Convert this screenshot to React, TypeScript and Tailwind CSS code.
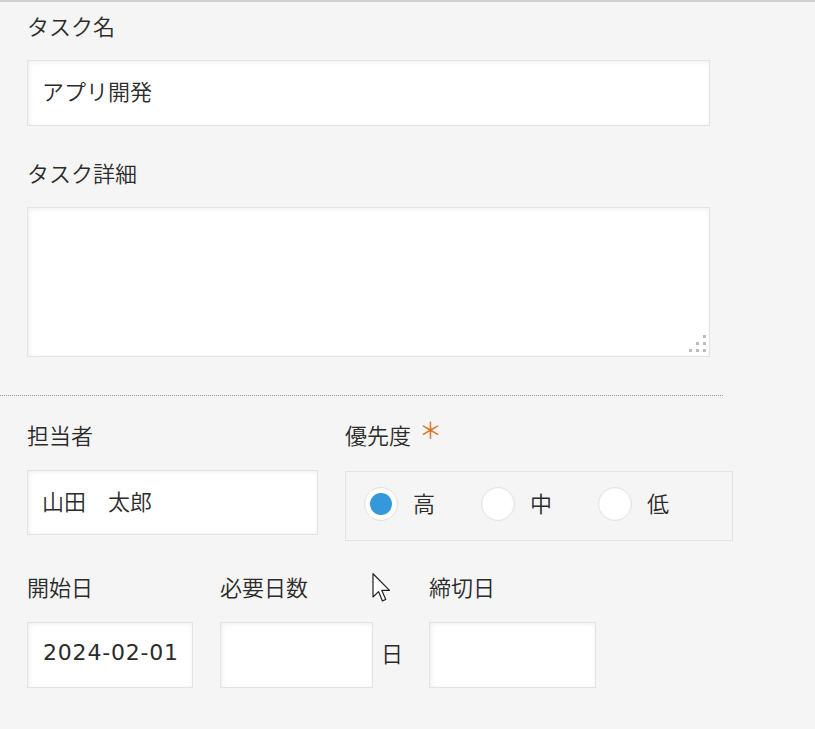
import type { ReactNode } from 'react';

const font = { fontFamily: '"Noto Sans CJK JP", "Noto Sans", sans-serif' };

function Label({ children, className = '' }: { children: ReactNode; className?: string }) {
  return (
    <div className={`h-[32px] text-[22px] leading-[26px] font-[350] text-[#2b2b2b] whitespace-nowrap ${className}`}>{children}</div>
  );
}

function Box({ className = '', children }: { className?: string; children?: ReactNode }) {
  return (
    <div
      className={`relative bg-white border border-[#e3e3e3] shadow-[inset_1px_1px_5px_rgba(0,0,0,0.07)] flex items-center pb-[5px] text-[22px] font-[350] text-[#2b2b2b] ${className}`}
    >
      {children}
    </div>
  );
}

function Radio({ label, checked }: { label: string; checked?: boolean }) {
  return (
    <div className="flex items-center gap-[15px]">
      <div className="w-[34px] h-[34px] rounded-full bg-white border border-[#e3e3e3] shadow-[inset_0_0_3px_rgba(0,0,0,0.06)] flex items-center justify-center">
        {checked && <div className="w-[22px] h-[22px] rounded-full bg-[#3498db]" />}
      </div>
      <span className="pb-[3px] text-[22px] font-[350] text-[#2b2b2b]">{label}</span>
    </div>
  );
}

export default function App() {
  return (
    <div style={font} className="relative min-h-[729px] w-[815px] bg-[#f5f5f5] border-t-2 border-[#cfcfcf] overflow-hidden">
      <div className="pl-[27px] pt-[10px]">
        <Label>タスク名</Label>
        <Box className="mt-[16px] w-[683px] h-[66px] pl-[14px]">アプリ開発</Box>

        <Label className="mt-[33px]">タスク詳細</Label>
        <Box className="mt-[16px] w-[683px] h-[150px]">
          <svg className="absolute right-[2px] bottom-[3px]" width="18" height="18" viewBox="0 0 18 18">
            <rect x="14" y="0" width="3" height="3" fill="#bdbdbd" />
            <rect x="7" y="7" width="3" height="3" fill="#bdbdbd" />
            <rect x="14" y="7" width="3" height="3" fill="#bdbdbd" />
            <rect x="0" y="14" width="3" height="3" fill="#bdbdbd" />
            <rect x="7" y="14" width="3" height="3" fill="#bdbdbd" />
            <rect x="14" y="14" width="3" height="3" fill="#bdbdbd" />
          </svg>
        </Box>
      </div>

      <div className="mt-[38px] w-[723px] border-t border-dotted border-[#9a9a9a]" />

      <div className="pl-[27px] mt-[25px] flex items-start gap-[27px]">
        <div>
          <Label>担当者</Label>
          <Box className="mt-[17px] w-[291px] h-[65px] pl-[14px]">山田　太郎</Box>
        </div>
        <div>
          <Label className="flex items-start">
            優先度
            <span className="ml-[8px] -mt-[5px] text-[23px] leading-[27px] font-normal text-[#d97a2b]">＊</span>
          </Label>
          <div className="mt-[18px] w-[388px] h-[70px] border border-[#e3e3e3] flex items-start pt-[14px] pl-[18px] gap-[46px]">
            <Radio label="高" checked />
            <Radio label="中" />
            <Radio label="低" />
          </div>
        </div>
      </div>

      <div className="pl-[27px] mt-[32px] flex items-start">
        <div>
          <Label>開始日</Label>
          <Box className="mt-[17px] w-[166px] h-[66px] pl-[15px]">
            <span className="text-[22px] font-normal tracking-[0.8px]" style={{ fontFamily: '"DejaVu Sans", sans-serif' }}>
              2024-02-01
            </span>
          </Box>
        </div>
        <div className="ml-[27px]">
          <Label>必要日数</Label>
          <div className="mt-[17px] flex items-center">
            <Box className="w-[153px] h-[66px]" />
            <span className="ml-[8px] pb-[5px] text-[22px] font-[350] text-[#2b2b2b]">日</span>
          </div>
        </div>
        <div className="ml-[26px]">
          <Label>締切日</Label>
          <Box className="mt-[17px] w-[167px] h-[66px]" />
        </div>
      </div>

      <svg className="absolute left-[372px] top-[571px]" width="20" height="30" viewBox="0 0 13 20">
        <path d="M0.5 0.5 L0.5 16 L4.2 12.4 L6.8 18.6 L9 17.7 L6.4 11.6 L11.5 11.6 Z" fill="#fff" stroke="#222" strokeWidth="0.8" strokeLinejoin="round" />
      </svg>
    </div>
  );
}
